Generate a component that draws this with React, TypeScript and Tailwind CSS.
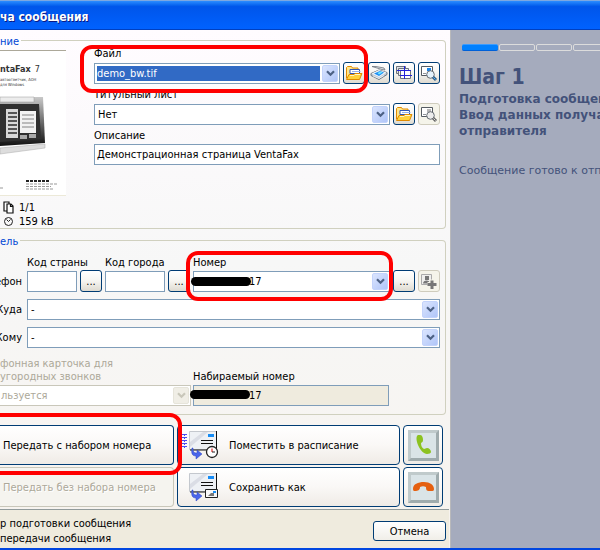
import React from "react";

type Kids = { children?: React.ReactNode };

function Chevron({ disabled = false }: { disabled?: boolean }) {
  return (
    <span
      className={
        "pointer-events-none flex w-4 shrink-0 items-center justify-center rounded-xs border " +
        (disabled
          ? "border-[#e6e4da] bg-[#f0eee6] text-[#c9c7ba]"
          : "border-[#c3d3fb] bg-linear-to-br from-[#dbe5fe] to-[#b0c5f8] text-[#4d6185]")
      }
    >
      <svg width="9" height="7" viewBox="0 0 9 7" fill="none" stroke="currentColor" strokeWidth="2.2">
        <path d="M1 1.3 4.5 4.8 8 1.3" />
      </svg>
    </span>
  );
}

function Combo({
  id,
  value,
  selected = false,
  disabled = false,
  masked = false,
}: {
  id: string;
  value: string;
  selected?: boolean;
  disabled?: boolean;
  masked?: boolean;
}) {
  return (
    <div
      className={
        "relative flex h-[21px] min-w-0 flex-1 gap-px border bg-white p-px " +
        (disabled ? "border-[#c9c7ba]" : "border-[#7f9db9]")
      }
    >
      <select
        id={id}
        disabled={disabled}
        className={
          "min-w-0 flex-1 appearance-none rounded-none outline-none " +
          (selected ? "m-px bg-[#316ac5] text-white " : "") +
          (masked ? "pl-[54px] " : disabled || selected ? "pl-0 " : "pl-0.5 ") +
          (disabled ? "text-[#aca899] opacity-100" : "")
        }
      >
        <option>{value}</option>
      </select>
      <Chevron disabled={disabled} />
      {masked && <Mask />}
    </div>
  );
}

function Mask() {
  return <span className="absolute top-[5px] -left-[3px] h-[9px] w-[60px] rounded-full bg-black" />;
}

function ToolButton({ label, disabled = false, children }: Kids & { label: string; disabled?: boolean }) {
  return (
    <button
      aria-label={label}
      disabled={disabled}
      className={
        "flex size-[22px] shrink-0 items-center justify-center rounded-[3px] border " +
        (disabled
          ? "border-[#cfccbd] bg-[#f5f4ea]"
          : "border-[#003c74] bg-linear-to-b from-white via-[#f6f5f1] to-[#dedad0]")
      }
    >
      {children}
    </button>
  );
}

function Highlight({ className }: { className: string }) {
  return <span className={"pointer-events-none absolute z-10 border-4 border-[#ff0000] " + className} />;
}

function FolderIcon() {
  return (
    <svg width="18" height="16" viewBox="0 0 18 16">
      <path d="M1.5 13V2.5l1-1h4l1 1.5H13v9z" fill="#ffe58a" stroke="#e08a00" />
      <path d="M5 4.5h9.5v4H5z" fill="#fff" stroke="#3156b4" />
      <path d="M7 6.5h8.5" stroke="#9ab4ea" />
      <path d="M1.5 14.5 4 9.5h5l1-1h7L14.5 14.5z" fill="#ffd23c" stroke="#e08a00" />
      <path d="M5 10.5h4l1-1h5" stroke="#fff6c8" fill="none" />
    </svg>
  );
}

function ScannerIcon() {
  return (
    <svg width="18" height="16" viewBox="0 0 18 16">
      <path d="M1 8.5 9 5l8 2.5v2L9 14.5 1 10.5z" fill="#c3ccd6" stroke="#6b7681" />
      <path d="M1.5 8.5 9 5l7.5 2.5L9 12z" fill="#eef4f8" />
      <path d="m4 8.500 6-2.500 4 1.500L9 11z" fill="#1f8ff5" />
      <path d="m7.500 8 3-1.500 2 1L9 9.500z" fill="#6fe8ff" />
      <path d="M2 1.500 12 4.500l3 .5-1-2L6 1.500z" fill="#dfe5ea" stroke="#6d747c" strokeWidth=".8" />
      <path d="m3 11 6 2.500 5-3" stroke="#fff" fill="none" strokeWidth=".7" />
    </svg>
  );
}

function PagesIcon() {
  return (
    <svg width="18" height="16" viewBox="0 0 18 16" fill="none">
      <path d="M1.500 1.500h9v7h-9z" fill="#dfe1e6" stroke="#6d737c" />
      <path d="M3.500 3.500h10v7h-10z" fill="#eceef2" stroke="#6d737c" />
      <path d="M5.500 5.500h10v8h-10z" fill="#fff" stroke="#6d737c" />
      <path d="M2 5.500h14M5 10.500h12M9.500 1v13" stroke="#2424d8" />
    </svg>
  );
}

function PreviewIcon({ gray = false }: { gray?: boolean }) {
  return (
    <svg width="18" height="17" viewBox="0 0 18 17" fill="none">
      <path d="M1.500 1.500h11v9h-11z" fill="#fff" stroke="#555b62" />
      <path d="M7 3h4v3H7z" fill={gray ? "#b5b5b5" : "#1a85ea"} />
      <path d="M3 8.500h3" stroke="#8e9399" />
      <circle cx="10.500" cy="9.500" r="3.800" fill={gray ? "#ececec" : "#e4f2fc"} stroke="#666c73" />
      <path d="m13 12 3 3" stroke={gray ? "#666" : "#335f87"} strokeWidth="3" />
      <path d="m13.500 12.500 2 2" stroke={gray ? "#ddd" : "#55baff"} />
    </svg>
  );
}

function AddContactIcon() {
  return (
    <svg width="18" height="17" viewBox="0 0 18 17">
      <path d="M1.500 1.500h10v10h-10z" fill="#efefed" stroke="#aaa" />
      <path d="M5 3h4v4H5z" fill="#777" />
      <path d="M3 10.500c0-4 7-4 7 0z" fill="#777" />
      <path d="M12 6.500v9M7.500 11.500h9" stroke="#f5f4ea" strokeWidth="5" />
      <path d="M12 7.500v8.500M7.500 11.500h9" stroke="#777" strokeWidth="3" />
    </svg>
  );
}

function LetterIcon({ kind }: { kind: "clock" | "save" }) {
  return (
    <svg width="38" height="30" viewBox="0 0 38 30" className="shrink-0">
      {kind === "clock" && (
        <path d="M1 4.500h5M1 7.500h5M1 10.500h5M1 13.500h5M1 16.500h5M3.500 4v14" stroke="#4b4bef" strokeDasharray="2 1" />
      )}
      <path d="M8.500 1.500h27v18h-27z" fill="#eef1f5" stroke="#c4c8ce" />
      <path d="M9 12 22 2h5L9 17z" fill="#dadde5" />
      <path d="M35.500 1v19H9" fill="none" stroke="#111" />
      <path d="M27 4h6v3h-6z" fill="#168cf5" />
      <path d="M20 10.500h12M20 13.500h12" stroke="#111" />
      <path d="M12 18c0 4 1 5 4 5v-3l5 4-6 5v-3c-4 0-5-3-4-8z" fill="#4a65ea" stroke="#2c45bd" strokeWidth=".5" />
      {kind === "clock" ? (
        <>
          <circle cx="31" cy="22" r="5.500" fill="#fff" stroke="#222" strokeWidth="1.300" />
          <path d="M31 18.500V22" stroke="#d00" />
          <path d="M31 22h3" stroke="#222" />
        </>
      ) : (
        <>
          <path d="M24.500 17.500h12v8h-12z" fill="#f7f7f8" stroke="#222" />
          <path d="M32 19h3v2h-3z" fill="#168cf5" />
          <path d="m27 24 3-3h3v3z" fill="#777" />
        </>
      )}
    </svg>
  );
}

function HandsetTile({ kind }: { kind: "call" | "hang" }) {
  return (
    <svg width="31" height="31" viewBox="0 0 31 31">
      <path d="M0 0h31v31H0z" fill="#9fabad" />
      <path d="M0 0h31l-3 3H3v25l-3 3z" fill="#c0cacb" />
      <path d="M3 3h25v25H3z" fill="#dae4e7" />
      {kind === "call" ? (
        <path
          d="M10 5c-2 1-2 5 0 10 2 5 6 9 9 9 2 0 4-1 4-2 0-2-2-4-4-4-1 0-2 1-3 1-2-1-3-3-3-6 1-1 2-1 2-3 0-3-1-5-3-5-1 0-2 0-2 0z"
          fill="#8cc220"
        />
      ) : (
        <path
          d="M5 17c0-5 5-7 11-7s10 3 10 7c0 2-1 2-3 2-4 0-5 0-5-4-2-1-4-1-6 0 0 3-2 4-5 4-1 0-2 0-2-2z"
          fill="#e56010"
        />
      )}
    </svg>
  );
}

function ActionButton({
  className,
  label,
  disabled = false,
  children,
}: Kids & { className: string; label?: string; disabled?: boolean }) {
  return (
    <button
      aria-label={label}
      disabled={disabled}
      className={
        "flex h-10 items-center " +
        (disabled
          ? "border-[#c9c7ba] bg-[#f5f4ef] text-[#aca899] [text-shadow:1px_1px_#fff] "
          : "border-[#003c74] bg-linear-to-b from-white via-[#faf8f6] to-[#efebe6] ") +
        className
      }
    >
      {children}
    </button>
  );
}

/* Cover page thumbnail: the product name, a fax screen and the contact lines. */
function PagePreview() {
  return (
    <div className="h-[146px] w-[66px] overflow-hidden border-y border-t-[#aca899] border-b-[#ece9d8] bg-white">
      <p className="mt-2.5 flex h-4 items-center gap-1 text-[9px] whitespace-nowrap text-[#333]">
        <b>ntaFax</b>
        <span>7</span>
      </p>
      <div className="text-[4px] leading-[5px] whitespace-nowrap text-[#333]">
        <p>автоответчик, АОН</p>
        <p>для Windows</p>
      </div>
      <svg width="66" height="104" viewBox="0 0 66 104">
        <defs>
          <linearGradient id="frame" x1="0" y1="0" x2="0" y2="1">
            <stop offset="0" stopColor="#c9c9c9" />
            <stop offset="1" stopColor="#111" />
          </linearGradient>
        </defs>
        <path d="M0 10h43l2 46-45 3z" fill="url(#frame)" />
        <path d="M0 10h34v5H0z" fill="#ececec" stroke="#999" strokeWidth=".5" />
        <path d="M0 17h39l2 35-41 3z" fill="#303030" />
        <path d="M6 22h12v29H6z" fill="#d8d8d8" />
        <path d="M8 26h9M8 30h9M8 34h9M8 38h9M8 42h9M8 46h9" stroke="#555" strokeWidth="2" />
        <path d="M20 24h16v22H20z" fill="#f2f2f2" />
        <path d="M22 28h12M22 32h12M22 36h12M22 40h12" stroke="#bbb" strokeWidth="2" />
        <path d="M20 48h7v4h-7zM29 47h7v4h-7z" fill="#aaa" />
        <path d="m0 61 45-4v4L0 67z" fill="#ddd" stroke="#aaa" strokeWidth=".5" />
        <path d="M26 94h23" stroke="#222" strokeWidth="2" strokeDasharray="3 1" />
        <path d="M26 97h31M26 99.500h25M26 102h28M0 101h4" stroke="#999" strokeDasharray="3 1" />
      </svg>
    </div>
  );
}

function Label({ htmlFor, children }: Kids & { htmlFor: string }) {
  return (
    <label htmlFor={htmlFor} className="block h-[15px] leading-[13px] whitespace-nowrap">
      {children}
    </label>
  );
}

const input = "block h-[21px] w-full border border-[#7f9db9] bg-white px-0.5 outline-none";

export default function App() {
  return (
    <div className="overflow-hidden bg-[#fdfcfd] font-['DejaVu_Sans_Condensed','DejaVu_Sans',sans-serif] text-[11px] leading-[13px] text-black">
      <header className="flex h-[30px] items-center border-t border-b border-t-[#7da7e0] border-b-[#0040c0] bg-linear-to-b from-[#2b8cff] via-[#0055ea] via-20% to-[#0062ff] pt-1">
        <h1 className="text-[12px] font-bold whitespace-nowrap text-white [text-shadow:1px_1px_#0a1883]">ча сообщения</h1>
      </header>

      <div className="flex">
        <main className="w-3/4 shrink-0 bg-linear-to-b from-[#fffcff] via-[#f7f7f7] via-45% to-[#f7f3ee]">
          <section className="relative mt-2.5 mr-1 flex h-[189px] rounded-r border border-l-0 border-[#d0d0bf] pr-[5px]">
            <h2 className="absolute -top-1.5 left-0 bg-[#fffcff] pr-0.5 text-[#0046d5]">ние</h2>
            <div className="w-[94px] shrink-0 pt-[9px]">
              <PagePreview />
              <div className="mt-1 flex h-3.5 items-center gap-[5px] pl-[3px]">
                <svg width="11" height="13" viewBox="0 0 11 13" fill="#fff" stroke="#111" strokeWidth="1.200">
                  <path d="M1 1h5v9H1z" />
                  <path d="M4 3h4l2 2v7H4zM7.500 3v2.500H10" />
                </svg>
                1/1
              </div>
              <div className="flex h-3.5 items-center gap-[5px] pl-[3px] whitespace-nowrap">
                <svg width="11" height="11" viewBox="0 0 11 11" fill="none" stroke="#222">
                  <circle cx="5.500" cy="5.500" r="4" />
                  <path d="m3.500 3.500 2 2 2-2" />
                </svg>
                159 kB
              </div>
            </div>

            <div className="flex min-w-0 flex-1 flex-col gap-1 pt-1.5">
              <div className="relative">
                <Label htmlFor="file">Файл</Label>
                <div className="flex items-center gap-[3px]">
                  <Combo id="file" value="demo_bw.tif" selected />
                  <ToolButton label="Открыть файл">
                    <FolderIcon />
                  </ToolButton>
                  <ToolButton label="Сканировать">
                    <ScannerIcon />
                  </ToolButton>
                  <ToolButton label="Страницы">
                    <PagesIcon />
                  </ToolButton>
                  <ToolButton label="Просмотр">
                    <PreviewIcon />
                  </ToolButton>
                </div>
                <Highlight className="-top-0.5 right-[72px] -bottom-[9px] -left-3.5 rounded-xl" />
              </div>
              <div>
                <Label htmlFor="cover">Титульный лист</Label>
                <div className="flex items-center gap-[3px]">
                  <Combo id="cover" value="Нет" />
                  <ToolButton label="Открыть титульный лист">
                    <FolderIcon />
                  </ToolButton>
                  <ToolButton label="Просмотр титульного листа" disabled>
                    <PreviewIcon gray />
                  </ToolButton>
                </div>
              </div>
              <div>
                <Label htmlFor="description">Описание</Label>
                <input id="description" className={input} defaultValue="Демонстрационная страница VentaFax" />
              </div>
            </div>
          </section>

          <section className="relative mt-[11px] mr-1 h-[175px] rounded-r border border-l-0 border-[#d0d0bf] pt-[15px] pr-[5px]">
            <h2 className="absolute -top-1.5 left-0 bg-[#f7f7f7] pr-0.5 text-[#0046d5]">ель</h2>
            <div className="flex items-end gap-[3px]">
              <span className="flex w-6 shrink-0 justify-end pr-0.5 pb-1">ефон</span>
              <div className="w-[50px]">
                <Label htmlFor="country">Код страны</Label>
                <input id="country" className={input} />
              </div>
              <ToolButton label="Выбрать код страны">...</ToolButton>
              <div className="w-[60px]">
                <Label htmlFor="city">Код города</Label>
                <input id="city" className={input} />
              </div>
              <ToolButton label="Выбрать код города">...</ToolButton>
              <div className="relative min-w-0 flex-1">
                <Label htmlFor="number">Номер</Label>
                <div className="flex">
                  <Combo id="number" value="17" masked />
                </div>
                <Highlight className="-top-[5px] -right-[3px] -bottom-[9px] -left-[7px] rounded-xl" />
              </div>
              <ToolButton label="Выбрать номер">...</ToolButton>
              <ToolButton label="Добавить контакт" disabled>
                <AddContactIcon />
              </ToolButton>
            </div>
            <div className="mt-[7px] flex items-center">
              <label htmlFor="where" className="flex w-[27px] shrink-0 justify-end pr-[5px]">
                Куда
              </label>
              <Combo id="where" value="-" />
            </div>
            <div className="mt-[7px] flex items-center">
              <label htmlFor="whom" className="flex w-[27px] shrink-0 justify-end pr-[5px]">
                Кому
              </label>
              <Combo id="whom" value="-" />
            </div>
            <div className="mt-[9px] flex items-end gap-0.5">
              <div className="w-[191px] shrink-0">
                <label htmlFor="card" className="block pb-0.5 text-[#aca899]">
                  фонная карточка для
                  <br />
                  угородных звонков
                </label>
                <div className="-ml-px flex">
                  <Combo id="card" value="льзуется" disabled />
                </div>
              </div>
              <div className="relative mr-[51px] flex-1">
                <Label htmlFor="dialed">Набираемый номер</Label>
                <div className="relative">
                  <input
                    id="dialed"
                    readOnly
                    defaultValue="17"
                    className="block h-[21px] w-full border border-[#7f9db9] bg-[#efebde] pl-[55px] outline-none"
                  />
                  <Mask />
                </div>
              </div>
            </div>
          </section>

          <div className="mt-2.5 mr-[7px] mb-0.5 grid grid-cols-[174px_1fr_40px] gap-x-[3px] gap-y-0.5">
            <div className="relative">
              <ActionButton className="w-full rounded-r border border-l-0 pl-[3px]">Передать с набором номера</ActionButton>
              <Highlight className="-top-3 -right-2 -bottom-2.5 -left-4 rounded-xl" />
            </div>
            <ActionButton className="gap-2.5 rounded border pl-[3px]">
              <LetterIcon kind="clock" />
              Поместить в расписание
            </ActionButton>
            <ActionButton className="justify-center rounded border" label="Позвонить">
              <HandsetTile kind="call" />
            </ActionButton>
            <ActionButton className="w-full rounded-r border border-l-0 pl-[3px]" disabled>
              Передать без набора номера
            </ActionButton>
            <ActionButton className="gap-2.5 rounded border pl-[3px]">
              <LetterIcon kind="save" />
              Сохранить как
            </ActionButton>
            <ActionButton className="justify-center rounded border" label="Положить трубку">
              <HandsetTile kind="hang" />
            </ActionButton>
          </div>

          <footer className="mr-px flex h-[39px] items-center justify-between border-t border-[#919b9c] bg-[#efebde] pr-[3px]">
            <p className="pt-1 leading-[15px] whitespace-nowrap">
              р подготовки сообщения
              <br />
              передачи сообщения
            </p>
            <button className="mt-1 h-5 w-[73px] rounded-[3px] border border-[#003c74] bg-linear-to-b from-white to-[#f0eee8]">
              Отмена
            </button>
          </footer>
        </main>

        <aside className="min-w-0 flex-1 overflow-hidden border-l border-[#b9b9bb] bg-[#a5abbd] pt-3.5 pl-2 font-['DejaVu_Sans',sans-serif] text-[#43527a]">
          <div className="flex gap-px pl-[3px]">
            <span className="h-[7px] w-9 shrink-0 rounded-xs border-y border-t-[#3a9cff] border-b-[#0060d8] bg-[#0080ff]" />
            <span className="h-[7px] w-9 shrink-0 rounded-xs border border-[#dcdcdc]" />
            <span className="h-[7px] w-9 shrink-0 rounded-xs border border-[#dcdcdc]" />
            <span className="h-[7px] w-9 shrink-0 rounded-xs border border-[#dcdcdc]" />
          </div>
          <h2 className="mt-3 font-['DejaVu_Sans_Condensed',sans-serif] text-[21px] leading-7 font-bold">Шаг 1</h2>
          <p className="text-[12px] leading-4 font-bold whitespace-nowrap">
            Подготовка сообщения
            <br />
            Ввод данных получателя и
            <br />
            отправителя
          </p>
          <p className="mt-6 text-[11px] leading-4 whitespace-nowrap">Сообщение готово к отправке</p>
        </aside>
      </div>
      <div className="h-0.5 bg-[#0046e0]" />
    </div>
  );
}
